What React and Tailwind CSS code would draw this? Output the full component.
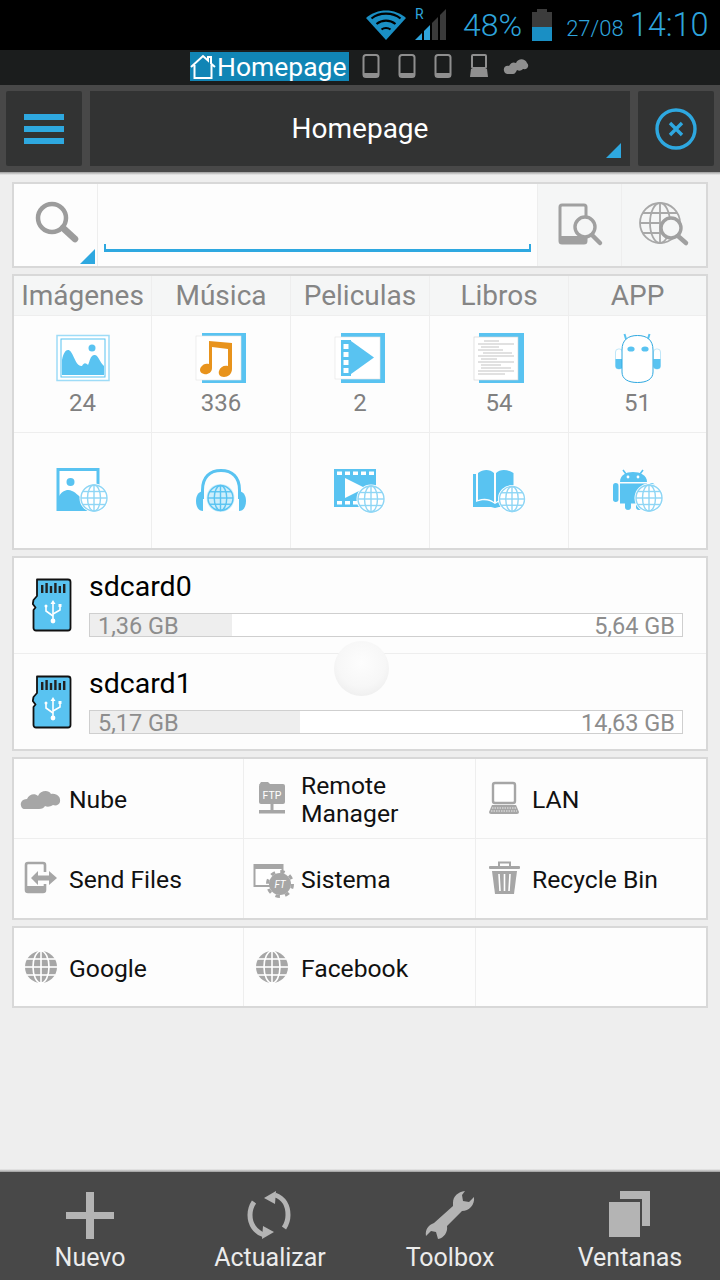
const BLUE = "#59c3f1";
const ACC = "#2ea8e0";
const GR = "#a6a6a6";

function Globe({ cx, cy, r, c = "#8fd6f5", halo = "#ffffff", sw = 1.4 }) {
  return (
    <g fill="none" stroke={c} strokeWidth={sw}>
      <circle cx={cx} cy={cy} r={r + 1.5} fill={halo} stroke="none" />
      <circle cx={cx} cy={cy} r={r} />
      <ellipse cx={cx} cy={cy} rx={r * 0.5} ry={r} />
      <line x1={cx} y1={cy - r} x2={cx} y2={cy + r} />
      <line x1={cx - r} y1={cy} x2={cx + r} y2={cy} />
      <line x1={cx - r * 0.87} y1={cy - r * 0.5} x2={cx + r * 0.87} y2={cy - r * 0.5} />
      <line x1={cx - r * 0.87} y1={cy + r * 0.5} x2={cx + r * 0.87} y2={cy + r * 0.5} />
    </g>
  );
}

const Box = ({ children }) => (
  <svg width="60" height="60" viewBox="0 0 60 60" className="block">{children}</svg>
);

const IPicture = () => (
  <Box>
    <rect x="4" y="7.5" width="52" height="45" fill="#fff" stroke="#9edcf7" strokeWidth="1.5" />
    <rect x="8" y="11" width="44" height="38" fill="#fff" stroke={BLUE} strokeWidth="1" />
    <path d="M9 47 V32 C11 22 15 20 18 24 C22 30 23 38 29 38 C31 34 33 35 35 37 C37 33 37 28 41 27 C45 26 46 33 51 38 V47 Z" fill={BLUE} />
    <circle cx="39" cy="20" r="3.5" fill={BLUE} />
  </Box>
);
const IMusic = () => (
  <Box>
    <rect x="11" y="5" width="44" height="50" fill={BLUE} />
    <rect x="5" y="8" width="45" height="44" fill="#fff" stroke="#e4e4e4" strokeWidth="0.6" />
    <path d="M18 13 L41 15 V41 C41 46 37 49 33 49 C29 49 27 46 28 43 C29 39 33 37 37 38 V21 L21 19 V40 C21 45 16 47 13 46 C9 45 8 42 10 39 C12 36 15 35 18 36 Z" fill="#e8931c" />
  </Box>
);
const IVideo = () => (
  <Box>
    <rect x="11" y="5" width="44" height="50" fill={BLUE} />
    <rect x="5" y="9" width="45" height="42" fill="#fff" stroke="#e4e4e4" strokeWidth="0.6" />
    <rect x="11" y="12" width="10" height="36" fill={BLUE} />
    <g fill="#fff">
      <rect x="13.5" y="16" width="5" height="5" />
      <rect x="13.5" y="24" width="5" height="5" />
      <rect x="13.5" y="32" width="5" height="5" />
      <rect x="13.5" y="40" width="5" height="5" />
    </g>
    <path d="M21 13 L44 29.5 L21 46 Z" fill={BLUE} />
  </Box>
);
const IBook = () => (
  <Box>
    <rect x="10" y="5" width="45" height="50" fill={BLUE} />
    <rect x="5" y="9" width="44" height="43" fill="#fff" stroke="#cfcfcf" strokeWidth="0.6" />
    <g stroke="#9a9a9a" strokeWidth="0.6">
      <line x1="15" y1="13" x2="30" y2="13" />
      <line x1="9" y1="16" x2="45" y2="16" />
      <line x1="12" y1="19" x2="30" y2="19" />
      <line x1="9" y1="22" x2="34" y2="22" />
      <line x1="14" y1="25" x2="43" y2="25" />
      <line x1="9" y1="28" x2="45" y2="28" />
      <line x1="12" y1="31" x2="28" y2="31" />
      <line x1="9" y1="34" x2="45" y2="34" />
      <line x1="12" y1="37" x2="32" y2="37" />
      <line x1="12" y1="40" x2="42" y2="40" />
      <line x1="9" y1="43" x2="45" y2="43" />
      <line x1="9" y1="46" x2="36" y2="46" />
    </g>
  </Box>
);
const IApp = () => (
  <Box>
    <path d="M18 11 L16.5 6 M40 11 L41.5 6" stroke={BLUE} strokeWidth="2" />
    <rect x="7.5" y="21" width="7" height="20" rx="3" fill="#fff" stroke="#bfe6f8" strokeWidth="1" />
    <rect x="45.5" y="21" width="7" height="20" rx="3" fill="#fff" stroke="#bfe6f8" strokeWidth="1" />
    <path d="M7.5 31 H14.5 V38 a3 3 0 0 1 -3 3 h-1 a3 3 0 0 1 -3 -3 Z" fill={BLUE} />
    <path d="M45.5 31 H52.5 V38 a3 3 0 0 1 -3 3 h-1 a3 3 0 0 1 -3 -3 Z" fill={BLUE} />
    <path d="M14 22 C14 12 20 7.5 29.5 7.5 C39 7.5 45 12 45 22 V44 C45 51 39 54.5 29.5 54.5 C20 54.5 14 51 14 44 Z" fill="#fff" stroke={ACC} strokeWidth="1" />
    <ellipse cx="23" cy="21" rx="3.6" ry="2.6" fill={BLUE} />
    <ellipse cx="37" cy="21" rx="3.6" ry="2.6" fill={BLUE} />
  </Box>
);
const IPictureG = () => (
  <Box>
    <rect x="5" y="8.5" width="40" height="40" fill="#fff" stroke={BLUE} strokeWidth="3" />
    <path d="M5 48 V37 C9 29 15 28 19 30 C24 32 26 36 30 38 L36 48 Z" fill={BLUE} />
    <circle cx="17.5" cy="21" r="4" fill={BLUE} />
    <Globe cx={41} cy={37} r={13} />
  </Box>
);
const IHeadG = () => (
  <Box>
    <path d="M11.5 38 V29 C11.5 16 19 9.5 30 9.5 C41 9.5 48.5 16 48.5 29 V38" fill="none" stroke={BLUE} strokeWidth="3" />
    <path d="M12 30 V50 C7 50 5 45 5 40 C5 35 7 31 12 30 Z" fill={BLUE} />
    <path d="M48 30 V50 C53 50 55 45 55 40 C55 35 53 31 48 30 Z" fill={BLUE} />
    <path d="M15 50 V36 H45 V50 Z" fill="#fff" />
    <Globe cx={29.5} cy={37} r={12.5} c={BLUE} halo="#cdeefb" />
  </Box>
);
const IVideoG = () => (
  <Box>
    <rect x="4" y="8" width="42" height="38" fill={BLUE} />
    <g fill="#fff">
      <rect x="7" y="10.5" width="5" height="3.5" />
      <rect x="15" y="10.5" width="5" height="3.5" />
      <rect x="23" y="10.5" width="5" height="3.5" />
      <rect x="31" y="10.5" width="5" height="3.5" />
      <rect x="39" y="10.5" width="5" height="3.5" />
      <rect x="7" y="40" width="5" height="3.5" />
      <rect x="15" y="40" width="5" height="3.5" />
      <rect x="23" y="40" width="5" height="3.5" />
      <path d="M15 17 L35 27 L15 37 Z" />
    </g>
    <Globe cx={41} cy={38} r={13} />
  </Box>
);
const IBookG = () => (
  <Box>
    <path d="M4 13 H7 V41 C14 38 21 39 26 43 C31 39 38 38 48 41 V13 H48 V46 H30 L26 47 L22 46 H4 Z" fill={BLUE} />
    <path d="M9 12 C14 8 21 8 25 12 V41 C20 37 14 37 9 39 Z" fill={BLUE} />
    <path d="M27 12 C31 8 38 8 44.5 12 V39 C38 37 32 37 27 41 Z" fill={BLUE} />
    <Globe cx={43} cy={38} r={12.5} />
  </Box>
);
const IAndroidG = () => (
  <Box>
    <path d="M15 9 L18 13 M35 9 L32 13" stroke={BLUE} strokeWidth="1.6" />
    <path d="M12 21 C12 14 18 11 25 11 C32 11 39 14 39 21 Z" fill={BLUE} />
    <circle cx="20" cy="16" r="1.4" fill="#fff" />
    <circle cx="30" cy="16" r="1.4" fill="#fff" />
    <rect x="12" y="22.5" width="27" height="20" fill={BLUE} />
    <rect x="5" y="22" width="5.5" height="19" rx="2.7" fill={BLUE} />
    <rect x="41" y="22" width="5.5" height="19" rx="2.7" fill={BLUE} />
    <rect x="17" y="40" width="6" height="9" rx="3" fill={BLUE} />
    <rect x="28" y="40" width="6" height="9" rx="3" fill={BLUE} />
    <Globe cx={41} cy={37} r={13} />
  </Box>
);

const SD = () => (
  <svg width="40" height="54" viewBox="0 0 40 54" className="block">
    <path d="M5 1.5 H36 a2.5 2.5 0 0 1 2.5 2.5 V50 a2.5 2.5 0 0 1 -2.5 2.5 H4 a2.5 2.5 0 0 1 -2.5 -2.5 V32 L3.5 29.5 L0.8 26 L1.5 22 L5 18 Z" fill={BLUE} stroke="#111" strokeWidth="1.8" strokeLinejoin="round" />
    <g fill="#222">
      <rect x="9" y="7" width="2.4" height="8" />
      <rect x="13.4" y="5" width="2.4" height="10" />
      <rect x="17.8" y="8" width="2.4" height="7" />
      <rect x="22.2" y="5" width="2.4" height="10" />
      <rect x="26.6" y="8" width="2.4" height="7" />
      <rect x="31" y="6" width="2.4" height="9" />
    </g>
    <g stroke="#fff" strokeWidth="1.6" fill="none">
      <path d="M21 26 V43" />
      <path d="M21 38 L14 33 V29" />
      <path d="M21 36 L28 32 V28" />
    </g>
    <circle cx="21" cy="43" r="2.4" fill="#fff" />
    <circle cx="14" cy="28" r="1.5" fill="#fff" />
    <rect x="26.5" y="26" width="3" height="3" fill="#fff" />
    <path d="M21 22 L23.5 26 H18.5 Z" fill="#fff" />
  </svg>
);

const S = ({ children }) => (
  <svg width="44" height="44" viewBox="0 0 44 44" className="block shrink-0">{children}</svg>
);
const ICloud = () => (
  <S>
    <path d="M3 32 C0 27 3 23 8 23 C10 18 16 17 19 20 C21 15 29 13 32 18 C38 17 42 21 41 26 C40 29 37 30 34 29 C31 31 28 31 26 30 C25 32 23 33 20 33 H7 C5 33 4 33 3 32 Z" fill={GR} />
  </S>
);
const IFtp = () => (
  <S>
    <rect x="9" y="8" width="26" height="20" rx="2" fill={GR} />
    <path d="M9 9 L11 6 H18 L20 8" fill={GR} />
    <text x="22" y="23" textAnchor="middle" fontSize="10.5" fill="#fff" fontFamily="Roboto, sans-serif">FTP</text>
    <rect x="20.5" y="28" width="3" height="7" fill={GR} />
    <rect x="9" y="34" width="26" height="3.5" fill={GR} />
  </S>
);
const ILan = () => (
  <S>
    <rect x="11" y="7" width="22" height="20" rx="2" fill="#fff" stroke={GR} strokeWidth="2.4" />
    <path d="M10 29 H34 L37 36 a2 2 0 0 1 -2 2 H9 a2 2 0 0 1 -2 -2 Z" fill={GR} />
    <path d="M10 32 H34 M9 35 H35" stroke="#fff" strokeWidth="0.8" strokeDasharray="1.5 1" />
  </S>
);
const ISend = () => (
  <S>
    <path d="M26 16 V9 a2 2 0 0 0 -2 -2 H9 a2 2 0 0 0 -2 2 V34 a2 2 0 0 0 2 2 H24 a2 2 0 0 0 2 -2 V28" fill="none" stroke={GR} strokeWidth="2.6" />
    <path d="M7 30 H26 V36 H7 Z" fill={GR} />
    <path d="M12 22 L19 15 V19.5 H30 V15 L38 22 L30 29 V24.5 H19 V29 Z" fill={GR} />
  </S>
);
const ISys = () => (
  <S>
    <rect x="4.5" y="9" width="28" height="21" fill="#fff" stroke={GR} strokeWidth="2" />
    <rect x="4" y="8" width="29" height="5" fill={GR} />
    <circle cx="30" cy="28" r="11" fill={GR} />
    <circle cx="30" cy="28" r="12.5" fill="none" stroke={GR} strokeWidth="3" strokeDasharray="4.5 5.3" />
    <text x="30" y="32" textAnchor="middle" fontSize="10" fontStyle="italic" fill="#fff" fontFamily="Roboto, sans-serif">FT</text>
  </S>
);
const IBin = () => (
  <S>
    <path d="M17 10 V6.5 H28 V10" fill="none" stroke={GR} strokeWidth="2" />
    <rect x="7" y="10" width="31" height="3" rx="1" fill={GR} />
    <path d="M10 15 H35 L32 38 H13 Z" fill={GR} />
    <path d="M17 18 L18 35 M22.5 18 V35 M28 18 L27 35" stroke="#fff" strokeWidth="1.6" />
  </S>
);
const IGlobeSolid = () => (
  <svg width="44" height="44" viewBox="0 0 44 44" className="block shrink-0">
    <circle cx="22" cy="22" r="16" fill={GR} />
    <g fill="none" stroke="#fff" strokeWidth="1.6">
      <ellipse cx="22" cy="22" rx="8" ry="16" />
      <line x1="22" y1="6" x2="22" y2="38" />
      <line x1="6" y1="22" x2="38" y2="22" />
      <line x1="8" y1="14" x2="36" y2="14" />
      <line x1="8" y1="30" x2="36" y2="30" />
    </g>
  </svg>
);

const Tri = ({ size = 15 }) => (
  <svg width={size} height={size} viewBox="0 0 15 15" className="block">
    <path d="M15 0 V15 H0 Z" fill={ACC} />
  </svg>
);

const Phone = () => (
  <svg width="18" height="24" viewBox="0 0 18 24" className="block">
    <rect x="1.5" y="1" width="15" height="22" rx="2.5" fill="none" stroke="#8f8f8f" strokeWidth="2" />
    <rect x="1" y="19" width="16" height="4" rx="1.5" fill="#8f8f8f" />
  </svg>
);

const cats = [
  ["Imágenes", "24", IPicture, IPictureG],
  ["Música", "336", IMusic, IHeadG],
  ["Peliculas", "2", IVideo, IVideoG],
  ["Libros", "54", IBook, IBookG],
  ["APP", "51", IApp, IAndroidG],
];

const cardCls = "border-2 border-[#d8d8d8] bg-[#fdfdfd]";
const colCls = ["pl-[5px] gap-[6px]", "pl-[6px] gap-[7px]", "pl-[6px] gap-[6px]"];

function Short({ col, Icon, label, bottom }) {
  return (
    <div className={`flex items-center ${colCls[col]} ${col < 2 ? "border-r border-[#eeeeee]" : ""} ${bottom ? "border-b border-[#eeeeee]" : ""}`}>
      {Icon ? <Icon /> : null}
      {label ? <span className="mt-[3px] text-[24.7px] leading-[28px] text-[#111111]">{label}</span> : null}
    </div>
  );
}

function Storage({ name, used, total, pct, rowCls, border }) {
  return (
    <div className={`flex items-start pl-[18px] pr-[23px] gap-[17px] ${rowCls} ${border ? "border-b border-[#eeeeee]" : ""}`}>
      <div className="mt-[7px]"><SD /></div>
      <div className="flex-1 flex flex-col">
        <div className="text-[28.5px] leading-[32px] text-black">{name}</div>
        <div className="relative mt-[10px] h-[24px] border border-[#cfcfcf] bg-white">
          <div className="absolute left-0 top-0 bottom-0 bg-[#eeeeee]" style={{ width: pct + "%" }} />
          <div className="relative flex justify-between items-center h-full pl-[8px] pr-[7px] pt-[2px] text-[23.5px] leading-[22px] text-[#8d8d8d]">
            <span>{used}</span>
            <span>{total}</span>
          </div>
        </div>
      </div>
    </div>
  );
}

export default function App() {
  return (
    <div className="relative w-[720px] h-[1280px] overflow-hidden flex flex-col bg-[#eeeeee] font-[Roboto,sans-serif]">
      {/* status bar */}
      <div className="h-[50px] bg-black flex items-center text-[#2ea4dc] pl-[366px]">
        <svg width="40" height="32" viewBox="0 0 40 32" className="block">
          <path d="M20 31 L0 9 C11 -1 29 -1 40 9 Z" fill="#1a8fc4" />
          <path d="M5.5 9.5 C13 3 27 3 34.5 9.5 M10.5 15 C16 10.5 24 10.5 29.5 15 M15.5 20.5 C18 18.5 22 18.5 24.5 20.5" stroke="#000" strokeWidth="2.2" fill="none" />
        </svg>
        <div className="relative w-[34px] h-[32px] ml-[8px]">
          <span className="absolute left-[1px] top-[-2px] text-[14px] leading-[14px]">R</span>
          <svg width="32" height="32" viewBox="0 0 32 32" className="absolute left-[1px] top-0 block">
            <path d="M0 31 L7 24 V31 Z" fill="#2ea4dc" />
            <path d="M9 22 L15 16 V31 H9 Z" fill="#2ea4dc" />
            <path d="M17 14 L23 8 V31 H17 Z" fill="#3a3a3a" />
            <path d="M25 6 L31 0 V31 H25 Z" fill="#3a3a3a" />
          </svg>
        </div>
        <span className="ml-[15px] text-[32px] leading-[36px] font-light">48%</span>
        <svg width="20" height="32" viewBox="0 0 20 32" className="block ml-[10px]">
          <rect x="5" y="0" width="10" height="3" fill="#3c3c3c" />
          <rect x="0" y="3" width="20" height="15" fill="#3c3c3c" />
          <rect x="0" y="18" width="20" height="14" fill="#1a8fc4" />
        </svg>
        <span className="ml-[14px] mt-[7px] text-[22px] leading-[26px] font-light">27/08</span>
        <span className="ml-[6px] text-[32.5px] leading-[36px] font-light">14:10</span>
      </div>

      {/* tab strip */}
      <div className="h-[35px] bg-[#1b1d1d] flex items-center pl-[190px] pb-[4px]">
        <div className="h-[29px] w-[159px] bg-[#1185b5] flex items-center text-white mt-[2px]">
          <svg width="26" height="26" viewBox="0 0 26 26" className="block shrink-0">
            <path d="M1 13 L13 2 L18 6.5 V3 H21 V9.5 L25 13 M4.5 11 V24 H21.5 V11" fill="none" stroke="#fff" strokeWidth="2" />
          </svg>
          <span className="ml-[1px] text-[26.5px] leading-[28px]">Homepage</span>
        </div>
        <div className="flex items-center ml-[13px] gap-[18px]">
          <Phone />
          <Phone />
          <Phone />
          <svg width="18" height="24" viewBox="0 0 18 24" className="block">
            <rect x="2" y="1" width="14" height="13" rx="1" fill="none" stroke="#8f8f8f" strokeWidth="2" />
            <path d="M1 15 H17 L18 23 H0 Z" fill="#8f8f8f" />
          </svg>
        </div>
        <svg width="26" height="20" viewBox="0 0 26 20" className="block ml-[15px]">
          <path d="M2 17 C-1 13 2 9 6 10 C8 6 11 6 13 7 C15 2 22 2 24 7 C27 10 24 14 20 13 C18 15 16 15 14 14 C13 16 12 18 10 18 H4 Z" fill="#8f8f8f" />
        </svg>
      </div>

      {/* toolbar */}
      <div className="h-[87px] bg-[#484848] pt-[6px] px-[6px] flex gap-[8px] items-start">
        <div className="w-[76px] h-[75px] bg-[#323333] rounded-[2px] flex flex-col items-center justify-center gap-[6px]">
          <div className="w-[40px] h-[6px] bg-[#2ea8e0]" />
          <div className="w-[40px] h-[6px] bg-[#2ea8e0]" />
          <div className="w-[40px] h-[6px] bg-[#2ea8e0]" />
        </div>
        <div className="relative flex-1 h-[75px] bg-[#323333] flex items-center justify-center">
          <span className="text-[28px] leading-[30px] text-white">Homepage</span>
          <div className="absolute right-[9px] bottom-[8px]"><Tri /></div>
        </div>
        <div className="w-[76px] h-[75px] bg-[#323333] rounded-[2px] flex items-center justify-center">
          <svg width="42" height="42" viewBox="0 0 42 42" className="block">
            <circle cx="21" cy="21" r="19" fill="none" stroke="#2ea8e0" strokeWidth="3.4" />
            <path d="M15 15 L27 27 M27 15 L15 27" stroke="#2ea8e0" strokeWidth="3.4" />
          </svg>
        </div>
      </div>
      <div className="h-[3px] bg-gradient-to-b from-[#9b9b9b] to-[#eeeeee]" />

      {/* content */}
      <div className="flex-1 flex flex-col gap-[6px] px-[12px] pt-[7px]">
        {/* search */}
        <div className={`h-[86px] flex ${cardCls}`}>
          <div className="relative w-[84px] border-r border-[#eeeeee] flex items-center justify-center pb-[4px]">
            <svg width="46" height="46" viewBox="0 0 46 46" className="block">
              <circle cx="19" cy="18" r="14" fill="none" stroke="#9c9c9c" strokeWidth="4.5" />
              <path d="M30 28 L42 39" stroke="#9c9c9c" strokeWidth="6.5" strokeLinecap="round" />
            </svg>
            <div className="absolute right-[2px] bottom-[2px]"><Tri /></div>
          </div>
          <div className="w-[439px] flex items-end px-[6px] pb-[14px]">
            <div className="w-full h-[8px] border-b-[3px] border-x-2 border-[#2ea8e0]" />
          </div>
          <div className="w-[85px] bg-[#f5f6f6] border-x border-[#eeeeee] flex items-center justify-center">
            <svg width="48" height="48" viewBox="0 0 48 48" className="block">
              <rect x="4" y="4" width="26" height="38" rx="2" fill="none" stroke="#a0a0a0" strokeWidth="3" />
              <rect x="4" y="35" width="26" height="7" fill="#a0a0a0" />
              <circle cx="29" cy="26" r="10" fill="#f5f6f6" stroke="#a0a0a0" strokeWidth="3.4" />
              <path d="M36 34 L44 42" stroke="#a0a0a0" strokeWidth="4.5" strokeLinecap="round" />
            </svg>
          </div>
          <div className="flex-1 bg-[#f5f6f6] flex items-center justify-center">
            <svg width="52" height="48" viewBox="0 0 52 48" className="block">
              <g fill="none" stroke="#a8a8a8" strokeWidth="1.8">
                <circle cx="22" cy="22" r="20" />
                <ellipse cx="22" cy="22" rx="10" ry="20" />
                <line x1="22" y1="2" x2="22" y2="42" />
                <line x1="2" y1="22" x2="42" y2="22" />
                <line x1="5" y1="12" x2="39" y2="12" />
                <line x1="5" y1="32" x2="39" y2="32" />
              </g>
              <circle cx="33" cy="27" r="10" fill="#f5f6f6" stroke="#a0a0a0" strokeWidth="3.4" />
              <path d="M40 35 L48 42" stroke="#a0a0a0" strokeWidth="4.5" strokeLinecap="round" />
            </svg>
          </div>
        </div>

        {/* categories */}
        <div className={`h-[276px] grid grid-cols-[138px_139px_139px_139px_137px] grid-rows-[40px_117px_115px] ${cardCls}`}>
          {cats.map(([label], i) => (
            <div key={label} className={`bg-[#f5f6f6] border-b border-[#eeeeee] flex items-center justify-center text-[28px] leading-[32px] text-[#858585] ${i < 4 ? "border-r" : ""}`}>
              {label}
            </div>
          ))}
          {cats.map(([label, n, Icon]) => (
            <div key={label} className={`border-b border-[#eeeeee] flex flex-col items-center pt-[12px] ${label !== "APP" ? "border-r" : ""}`}>
              <Icon />
              <div className="mt-[1px] text-[24px] leading-[28px] text-[#808080]">{n}</div>
            </div>
          ))}
          {cats.map(([label, , , Icon]) => (
            <div key={label} className={`border-[#eeeeee] flex items-center justify-center ${label !== "APP" ? "border-r" : ""}`}>
              <Icon />
            </div>
          ))}
        </div>

        {/* storage */}
        <div className={`h-[195px] flex flex-col ${cardCls}`}>
          <Storage name="sdcard0" used="1,36 GB" total="5,64 GB" pct={24} rowCls="h-[96px] pt-[13px]" border />
          <Storage name="sdcard1" used="5,17 GB" total="14,63 GB" pct={35.4} rowCls="flex-1 pt-[14px]" />
        </div>

        {/* shortcuts */}
        <div className={`h-[163px] grid grid-cols-[230px_232px_1fr] grid-rows-2 ${cardCls}`}>
          <Short col={0} Icon={ICloud} label="Nube" bottom />
          <Short col={1} Icon={IFtp} label={<>Remote<br />Manager</>} bottom />
          <Short col={2} Icon={ILan} label="LAN" bottom />
          <Short col={0} Icon={ISend} label="Send Files" />
          <Short col={1} Icon={ISys} label="Sistema" />
          <Short col={2} Icon={IBin} label="Recycle Bin" />
        </div>

        {/* links */}
        <div className={`h-[82px] grid grid-cols-[230px_232px_1fr] ${cardCls}`}>
          <Short col={0} Icon={IGlobeSolid} label="Google" />
          <Short col={1} Icon={IGlobeSolid} label="Facebook" />
          <Short col={2} />
        </div>
      </div>

      {/* bottom bar */}
      <div className="h-[3px] bg-gradient-to-b from-[#eeeeee] to-[#9b9b9b]" />
      <div className="h-[108px] bg-[#484848] grid grid-cols-4 text-[#ececec]">
        <BottomItem label="Nuevo">
          <svg width="50" height="50" viewBox="0 0 50 50" className="block">
            <path d="M21 3 H29 V23 H49 V30 H29 V50 H21 V30 H1 V23 H21 Z" fill="#b4b4b4" />
          </svg>
        </BottomItem>
        <BottomItem label="Actualizar">
          <svg width="50" height="50" viewBox="0 0 50 50" className="block">
            <path d="M30 6 C39 9 43 17 43 26 C43 32 41 36 39 39" fill="none" stroke="#b4b4b4" strokeWidth="5" />
            <path d="M19 46 C10 43 5 35 5 26 C5 20 7 16 9 13" fill="none" stroke="#b4b4b4" strokeWidth="5" />
            <path d="M31 2 L19 9 L30 15 Z" fill="#b4b4b4" />
            <path d="M17 50 L29 43 L18 37 Z" fill="#b4b4b4" />
          </svg>
        </BottomItem>
        <BottomItem label="Toolbox">
          <svg width="50" height="50" viewBox="0 0 50 50" className="block">
            <path d="M40 2 C33 3 28 7 28 14 L28 17 L9 34 C3 36 0 41 1 47 L6 42 L11 43 L13 50 C19 49 23 43 22 37 L37 22 C44 22 50 16 49 8 L44 13 L38 12 L37 6 Z" fill="#b4b4b4" />
          </svg>
        </BottomItem>
        <BottomItem label="Ventanas">
          <svg width="50" height="50" viewBox="0 0 50 50" className="block">
            <path d="M15 2 H45 V37 H37 V10 H15 Z" fill="#b4b4b4" />
            <rect x="4" y="13" width="31" height="35" fill="#b4b4b4" />
          </svg>
        </BottomItem>
      </div>

      {/* loading spinner overlay */}
      <div className="absolute left-[334px] top-[641px] w-[55px] h-[55px] rounded-full bg-[radial-gradient(circle_at_50%_40%,#fdfdfd_0%,#f7f7f7_55%,#e8e8e8_100%)]" />
    </div>
  );
}

function BottomItem({ label, children }) {
  return (
    <div className="flex flex-col items-center pt-[17px]">
      {children}
      <span className="mt-[5px] text-[25px] leading-[28px]">{label}</span>
    </div>
  );
}
